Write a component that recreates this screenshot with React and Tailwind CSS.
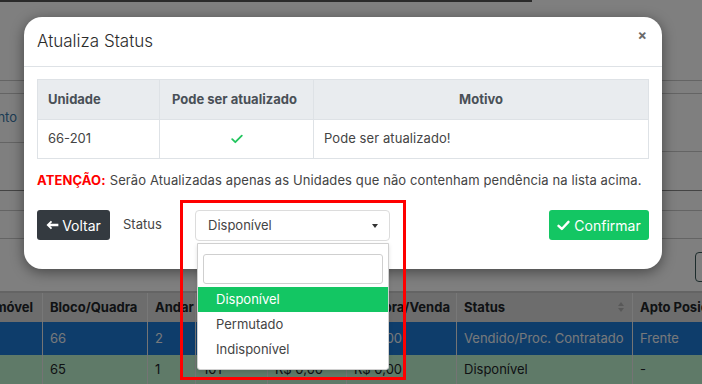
import React from "react";

const FONT = { fontFamily: "Inter, 'Noto Sans', sans-serif" };

function CheckIcon({ className }) {
  return (
    <svg viewBox="0 0 12 10" className={className} fill="none">
      <path d="M1.2 5.2 L4.3 8.2 L10.8 1.6" stroke="currentColor" strokeWidth="1.8" strokeLinecap="round" strokeLinejoin="round" />
    </svg>
  );
}

function BoldCheck({ className }) {
  return (
    <svg viewBox="0 0 14 12" className={className} fill="none">
      <path d="M1.6 6.4 L5.2 9.8 L12.4 2" stroke="currentColor" strokeWidth="2.6" strokeLinecap="round" strokeLinejoin="round" />
    </svg>
  );
}

function ArrowLeft({ className }) {
  return (
    <svg viewBox="0 0 16 12" className={className} fill="currentColor">
      <path d="M0.6 6 L6 0.8 L7.6 2.4 L5.2 4.6 H15.2 V7.4 H5.2 L7.6 9.6 L6 11.2 Z" />
    </svg>
  );
}

const cols = [
  { w: "w-[59px]", h: "Imóvel", r1: "", r2: "" },
  { w: "w-[105px]", h: "Bloco/Quadra", r1: "66", r2: "65" },
  { w: "w-[48px]", h: "Andar", r1: "2", r2: "1" },
  { w: "w-[72px]", h: "Unidade", r1: "201", r2: "101" },
  { w: "w-[79px]", h: "Valor", r1: "R$ 0,00", r2: "R$ 0,00" },
  { w: "w-[110px]", h: "Compra/Venda", r1: "R$ 0,00", r2: "R$ 0,00" },
  { w: "w-[176px]", h: "Status", r1: "Vendido/Proc. Contratado", r2: "Disponível" },
  { w: "w-[100px]", h: "Apto Posição", r1: "Frente", r2: "-" },
];

function BgTable() {
  return (
    <div className="ml-[-16px] flex w-[760px] flex-col text-[13px] border-t-2 border-[#c8c8c8]">
      <div className="flex h-[29px] bg-[#dadada]">
        {cols.map((c, i) => (
          <div key={i} className={`${c.w} relative flex shrink-0 items-center border-r border-[#f0f0f0] pl-[7px] font-bold text-[#212529] whitespace-nowrap overflow-hidden`}>
            {c.h}
            {c.h === "Status" && (
              <div className="absolute right-[8px] top-[9px] flex flex-col gap-[2px] opacity-30">
                <div className="h-0 w-0 border-x-[3px] border-b-[4px] border-x-transparent border-b-[#555]" />
                <div className="h-0 w-0 border-x-[3px] border-t-[4px] border-x-transparent border-t-[#555]" />
              </div>
            )}
          </div>
        ))}
      </div>
      <div className="flex h-[33px] bg-[#1c7ad6]">
        {cols.map((c, i) => (
          <div key={i} className={`${c.w} flex shrink-0 items-center border-r border-[#e8e8e8] pl-[7px] text-[#eef2f6] whitespace-nowrap overflow-hidden`}>
            {c.r1}
          </div>
        ))}
      </div>
      <div className="flex h-[30px] bg-[#bff4d0]">
        {cols.map((c, i) => (
          <div key={i} className={`${c.w} flex shrink-0 items-center border-r border-[#e8e8e8] pl-[7px] text-[#212529] whitespace-nowrap overflow-hidden`}>
            {c.r2}
          </div>
        ))}
      </div>
    </div>
  );
}

export default function App() {
  return (
    <div className="relative h-[384px] w-[702px] overflow-hidden bg-white" style={FONT}>
      {/* background page */}
      <div className="flex flex-col">
        <div className="h-[2px] w-[532px] bg-[#555]" />
        <div className="h-[78px]" />
        <div className="h-[14px] border-y border-[#c8c8c8]" />
        <div className="flex">
          <div className="flex h-[49px] w-[350px] items-center border-b border-[#c8c8c8]">
            <div className="flex w-[17px] justify-end overflow-hidden whitespace-nowrap text-[13px] text-[#3a78a8]">Empreendimento</div>
          </div>
          <div className="h-[58px] flex-1 border-b border-[#c8c8c8]" />
        </div>
        <div className="flex">
          <div className="h-[39px] w-[350px] border-b border-[#888]" />
          <div className="h-[39px] flex-1 border-b border-[#888]" />
        </div>
        <div className="h-[20px] border-b border-[#c8c8c8]" />
        <div className="h-[28px] border-b border-[#c8c8c8]" />
        <div className="flex h-[52px] items-start justify-end pt-[13px]">
          <div className="mr-[-30px] h-[30px] w-[37px] rounded-[4px] border border-[#3a5858]" />
        </div>
        <BgTable />
      </div>

      {/* overlay */}
      <div className="absolute inset-0 bg-black/50" />

      {/* modal */}
      <div className="absolute left-[24px] top-[17px] w-[638px] rounded-[18px] bg-white shadow-[0_3px_14px_rgba(0,0,0,0.45)]">
        <div className="relative flex h-[50px] items-center border-b border-[#dee2e6] px-[13px]">
          <span className="text-[17px] font-light text-[#2b2b2b]">Atualiza Status</span>
          <span className="absolute right-[15px] top-[7px] text-[14px] font-bold text-[#6b6b6b]">×</span>
        </div>
        <div className="px-[13px] pt-[12px] pb-[28px] text-[13px] text-[#333]">
          <div className="border border-[#dee2e6]">
            <div className="flex h-[39px] bg-[#e9ecef] font-bold text-[#495057]">
              <div className="flex w-[122px] items-center border-r border-[#dee2e6] pl-[10px]">Unidade</div>
              <div className="flex w-[154px] items-center border-r border-[#dee2e6] pl-[12px]">Pode ser atualizado</div>
              <div className="flex flex-1 items-center justify-center">Motivo</div>
            </div>
            <div className="flex h-[39px] border-t border-[#dee2e6] text-[#444]">
              <div className="flex w-[122px] items-center border-r border-[#dee2e6] pl-[10px]">66-201</div>
              <div className="flex w-[154px] items-center justify-center border-r border-[#dee2e6]">
                <CheckIcon className="h-[10px] w-[12px] text-[#22c55e]" />
              </div>
              <div className="flex flex-1 items-center pl-[10px] tracking-[0.08px]">Pode ser atualizado!</div>
            </div>
          </div>
          <div className="mt-[12px] flex h-[20px] items-center whitespace-nowrap tracking-[0.11px]">
            <span className="font-bold text-[#ff0000]">ATENÇÃO:</span>
            <span className="ml-[4px] text-[#444]">Serão Atualizadas apenas as Unidades que não contenham pendência na lista acima.</span>
          </div>
          <div className="mt-[19px] flex items-start">
            <div className="flex h-[30px] w-[73px] items-center justify-center gap-[3px] rounded-[3px] bg-[#343a40] text-[14px] text-white">
              <ArrowLeft className="h-[10px] w-[13px]" />
              <span>Voltar</span>
            </div>
            <div className="ml-[13px] w-[72px] pt-[5px] text-[13px] text-[#444]">Status</div>
            <div className="relative">
              <div className="flex h-[31px] w-[195px] items-center justify-between rounded-[4px] border border-[#dcdcdc] pl-[12px] pr-[11px] text-[#444]">
                <span>Disponível</span>
                <div className="h-0 w-0 border-x-[3.5px] border-t-[4px] border-x-transparent border-t-[#333]" />
              </div>
              <div className="absolute left-[2px] top-[33px] z-10 w-[192px] rounded-b-[3px] border border-[#d0d0d0] bg-white pb-[7px] pt-[10px] shadow-[0_2px_4px_rgba(0,0,0,0.12)]">
                <div className="mx-[5px] h-[30px] rounded-[3px] border border-[#cfcfcf]" />
                <div className="mt-[3px] flex h-[25px] items-center bg-[#13c663] pl-[18px] text-white">Disponível</div>
                <div className="flex h-[25px] items-center pl-[18px] text-[#444]">Permutado</div>
                <div className="flex h-[25px] items-center pl-[18px] text-[#444]">Indisponível</div>
              </div>
            </div>
            <div className="ml-auto flex h-[30px] w-[100px] items-center justify-center gap-[4px] rounded-[3px] bg-[#13c663] text-[14px] text-white">
              <BoldCheck className="h-[11px] w-[13px]" />
              <span>Confirmar</span>
            </div>
          </div>
        </div>
      </div>

      {/* annotation */}
      <div className="absolute left-[180px] top-[200px] h-[180px] w-[226px] border-[3px] border-[#ff0000]" />
    </div>
  );
}
